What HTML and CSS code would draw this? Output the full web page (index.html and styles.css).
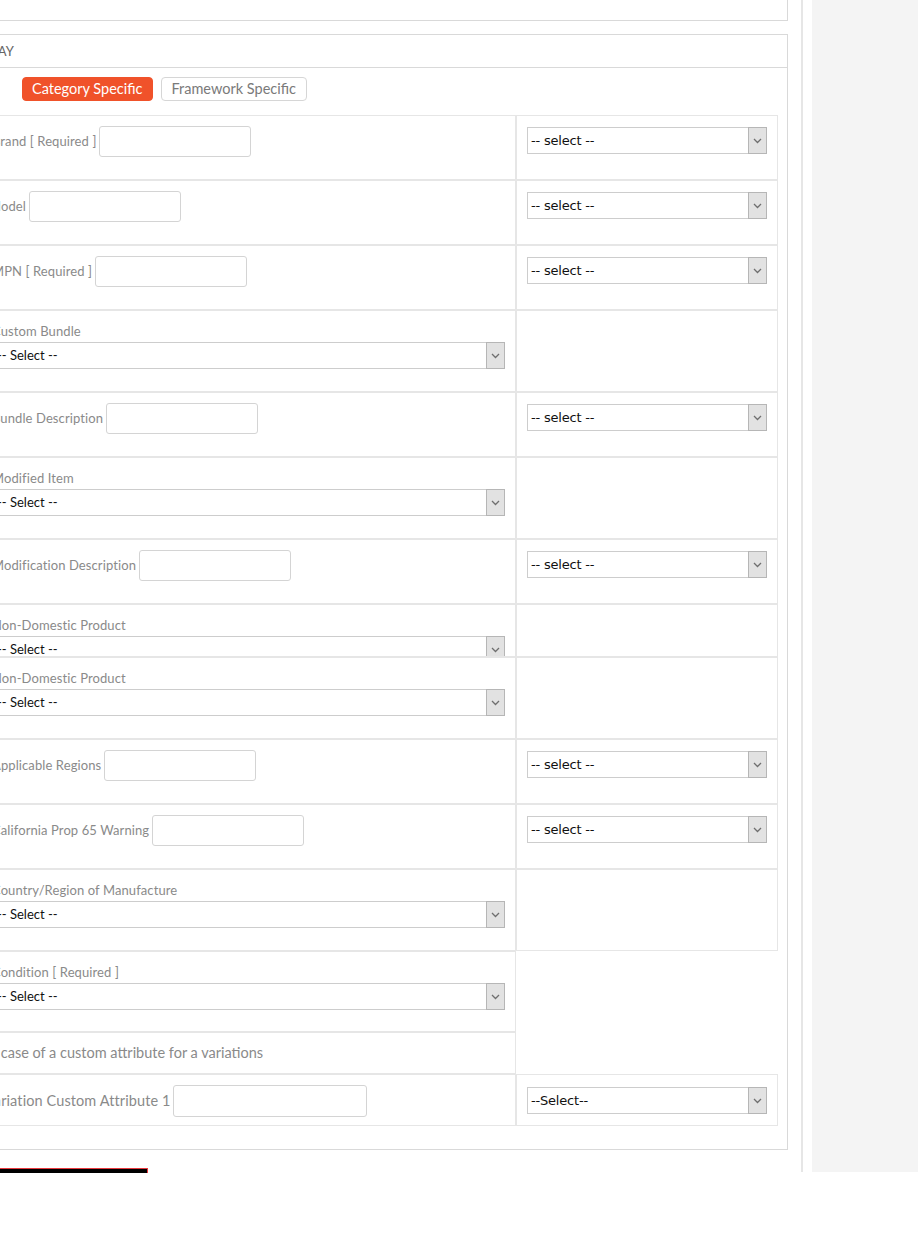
FILE: index.html
```html
<!DOCTYPE html>
<html lang="en">
<head>
    <meta charset="UTF-8">
    <title>Item Specifics</title>
    <link rel="stylesheet" href="styles.css">
</head>
<body>

<div class="page">
    <div class="main">
        <div class="panel panel-top"></div>

        <div class="panel">
            <div class="panel-heading">eBay</div>
            <div class="panel-body">
                <div class="tabs">
                    <span class="tab tab-active">Category Specific</span>
                    <span class="tab">Framework Specific</span>
                </div>

                <div class="attr-table">
                    <!-- inline rows: label + text box, mapping select on the right -->
                    <div class="attr-row">
                        <div class="attr-cell attr-main attr-inline"><label>Brand [ Required ]</label><input type="text" class="attr-input"></div>
                        <div class="attr-cell attr-side">
                            <div class="sel sel-map"><span class="sel-text">-- select --</span><span class="sel-btn"><svg width="9" height="6" viewBox="0 0 9 6"><path d="M1 1l3.5 3.5L8 1" fill="none" stroke="#6f6f6f" stroke-width="1.3"/></svg></span></div>
                        </div>
                    </div>
                    <div class="attr-row">
                        <div class="attr-cell attr-main attr-inline"><label class="lbl-short">Model</label><input type="text" class="attr-input"></div>
                        <div class="attr-cell attr-side">
                            <div class="sel sel-map"><span class="sel-text">-- select --</span><span class="sel-btn"><svg width="9" height="6" viewBox="0 0 9 6"><path d="M1 1l3.5 3.5L8 1" fill="none" stroke="#6f6f6f" stroke-width="1.3"/></svg></span></div>
                        </div>
                    </div>
                    <div class="attr-row">
                        <div class="attr-cell attr-main attr-inline"><label>MPN [ Required ]</label><input type="text" class="attr-input"></div>
                        <div class="attr-cell attr-side">
                            <div class="sel sel-map"><span class="sel-text">-- select --</span><span class="sel-btn"><svg width="9" height="6" viewBox="0 0 9 6"><path d="M1 1l3.5 3.5L8 1" fill="none" stroke="#6f6f6f" stroke-width="1.3"/></svg></span></div>
                        </div>
                    </div>

                    <!-- stacked rows: label above a full width select -->
                    <div class="attr-row">
                        <div class="attr-cell attr-main attr-stack">
                            <label>Custom Bundle</label>
                            <div class="sel sel-value"><span class="sel-text">-- Select --</span><span class="sel-btn"><svg width="9" height="6" viewBox="0 0 9 6"><path d="M1 1l3.5 3.5L8 1" fill="none" stroke="#6f6f6f" stroke-width="1.3"/></svg></span></div>
                        </div>
                        <div class="attr-cell attr-side"></div>
                    </div>
                    <div class="attr-row">
                        <div class="attr-cell attr-main attr-inline"><label>Bundle Description</label><input type="text" class="attr-input"></div>
                        <div class="attr-cell attr-side">
                            <div class="sel sel-map"><span class="sel-text">-- select --</span><span class="sel-btn"><svg width="9" height="6" viewBox="0 0 9 6"><path d="M1 1l3.5 3.5L8 1" fill="none" stroke="#6f6f6f" stroke-width="1.3"/></svg></span></div>
                        </div>
                    </div>
                    <div class="attr-row">
                        <div class="attr-cell attr-main attr-stack">
                            <label>Modified Item</label>
                            <div class="sel sel-value"><span class="sel-text">-- Select --</span><span class="sel-btn"><svg width="9" height="6" viewBox="0 0 9 6"><path d="M1 1l3.5 3.5L8 1" fill="none" stroke="#6f6f6f" stroke-width="1.3"/></svg></span></div>
                        </div>
                        <div class="attr-cell attr-side"></div>
                    </div>
                    <div class="attr-row">
                        <div class="attr-cell attr-main attr-inline"><label>Modification Description</label><input type="text" class="attr-input"></div>
                        <div class="attr-cell attr-side">
                            <div class="sel sel-map"><span class="sel-text">-- select --</span><span class="sel-btn"><svg width="9" height="6" viewBox="0 0 9 6"><path d="M1 1l3.5 3.5L8 1" fill="none" stroke="#6f6f6f" stroke-width="1.3"/></svg></span></div>
                        </div>
                    </div>
                    <div class="attr-row attr-row-cut">
                        <div class="attr-cell attr-main attr-stack">
                            <label>Non-Domestic Product</label>
                            <div class="sel sel-value"><span class="sel-text">-- Select --</span><span class="sel-btn"><svg width="9" height="6" viewBox="0 0 9 6"><path d="M1 1l3.5 3.5L8 1" fill="none" stroke="#6f6f6f" stroke-width="1.3"/></svg></span></div>
                        </div>
                        <div class="attr-cell attr-side"></div>
                    </div>
                    <div class="attr-row">
                        <div class="attr-cell attr-main attr-stack">
                            <label>Non-Domestic Product</label>
                            <div class="sel sel-value"><span class="sel-text">-- Select --</span><span class="sel-btn"><svg width="9" height="6" viewBox="0 0 9 6"><path d="M1 1l3.5 3.5L8 1" fill="none" stroke="#6f6f6f" stroke-width="1.3"/></svg></span></div>
                        </div>
                        <div class="attr-cell attr-side"></div>
                    </div>
                    <div class="attr-row">
                        <div class="attr-cell attr-main attr-inline"><label>Applicable Regions</label><input type="text" class="attr-input"></div>
                        <div class="attr-cell attr-side">
                            <div class="sel sel-map"><span class="sel-text">-- select --</span><span class="sel-btn"><svg width="9" height="6" viewBox="0 0 9 6"><path d="M1 1l3.5 3.5L8 1" fill="none" stroke="#6f6f6f" stroke-width="1.3"/></svg></span></div>
                        </div>
                    </div>
                    <div class="attr-row">
                        <div class="attr-cell attr-main attr-inline"><label>California Prop 65 Warning</label><input type="text" class="attr-input"></div>
                        <div class="attr-cell attr-side">
                            <div class="sel sel-map"><span class="sel-text">-- select --</span><span class="sel-btn"><svg width="9" height="6" viewBox="0 0 9 6"><path d="M1 1l3.5 3.5L8 1" fill="none" stroke="#6f6f6f" stroke-width="1.3"/></svg></span></div>
                        </div>
                    </div>
                    <div class="attr-row">
                        <div class="attr-cell attr-main attr-stack">
                            <label>Country/Region of Manufacture</label>
                            <div class="sel sel-value"><span class="sel-text">-- Select --</span><span class="sel-btn"><svg width="9" height="6" viewBox="0 0 9 6"><path d="M1 1l3.5 3.5L8 1" fill="none" stroke="#6f6f6f" stroke-width="1.3"/></svg></span></div>
                        </div>
                        <div class="attr-cell attr-side"></div>
                    </div>
                    <div class="attr-row">
                        <div class="attr-cell attr-main attr-stack attr-last">
                            <label>Condition [ Required ]</label>
                            <div class="sel sel-value"><span class="sel-text">-- Select --</span><span class="sel-btn"><svg width="9" height="6" viewBox="0 0 9 6"><path d="M1 1l3.5 3.5L8 1" fill="none" stroke="#6f6f6f" stroke-width="1.3"/></svg></span></div>
                        </div>
                    </div>

                    <!-- variation attributes -->
                    <div class="attr-row">
                        <div class="attr-cell attr-main attr-note">In case of a custom attribute for a variations</div>
                    </div>
                    <div class="attr-row">
                        <div class="attr-cell attr-main attr-inline attr-var"><label>Variation Custom Attribute 1</label><input type="text" class="attr-input attr-input-wide"></div>
                        <div class="attr-cell attr-side attr-side-var">
                            <div class="sel sel-map"><span class="sel-text">--Select--</span><span class="sel-btn"><svg width="9" height="6" viewBox="0 0 9 6"><path d="M1 1l3.5 3.5L8 1" fill="none" stroke="#6f6f6f" stroke-width="1.3"/></svg></span></div>
                        </div>
                    </div>
                </div>
            </div>
        </div>

        <div class="save-bar"></div>
    </div>

    <div class="sidebar">
        <div class="sidebar-inner"></div>
    </div>
</div>

</body>
</html>
```

FILE: styles.css
```css
body {
    margin: 0;
    padding: 0;
    font-family: "Lato", "Open Sans", sans-serif;
    font-size: 13px;
    color: #333;
    background: #fff;
}
.page {
    display: flex;
    height: 1173px;
    overflow: hidden;
}
.main {
    flex: 0 0 817px;
    margin-left: -29px;
}
.panel {
    box-sizing: border-box;
    border: 1px solid #d9d9d9;
    background: #fff;
}
.panel-top {
    height: 21px;
    border-top: none;
    margin-bottom: 13px;
}
.panel-heading {
    box-sizing: border-box;
    height: 33px;
    line-height: 32px;
    padding: 0 10px;
    border-bottom: 1px solid #d9d9d9;
    text-transform: uppercase;
    color: #666;
    font-size: 13px;
}
.panel-body {
    padding: 9px 9px 23px;
}
.tabs {
    display: flex;
    gap: 8px;
    padding-left: 41px;
    margin-bottom: 14px;
}
.tab {
    box-sizing: border-box;
    height: 24px;
    line-height: 22px;
    padding: 0 9px;
    border: 1px solid #d6d6d6;
    border-radius: 4px;
    font-size: 14.5px;
    color: #7a7a7a;
    background: #fff;
}
.tab + .tab {
    padding: 0 10px;
}
.tab-active {
    background: #f0522a;
    border-color: #f0522a;
    color: #fff;
}

/* attribute grid */
.attr-row {
    display: flex;
}
.attr-cell {
    box-sizing: border-box;
    border: 1px solid #e6e6e6;
}
.attr-main {
    flex: 0 0 535px;
    padding: 10px 10px 22px;
}
.attr-main label {
    color: #8a8a8a;
    letter-spacing: 0.1px;
}
.attr-inline {
    display: flex;
    align-items: flex-start;
    gap: 3px;
}
.attr-inline label {
    line-height: 31px;
}
.attr-inline .lbl-short {
    margin-left: -3px;
}
.attr-side {
    flex: 0 0 262px;
    padding: 11px 10px;
}
.attr-input {
    box-sizing: border-box;
    flex: none;
    width: 152px;
    height: 31px;
    margin: 0;
    padding: 0;
    border: 1px solid #d4d4d4;
    border-radius: 3px;
}
.attr-input-wide {
    width: 194px;
    height: 32px;
}
.attr-stack {
    line-height: 20px;
}
.attr-stack label {
    display: block;
    margin-bottom: 1px;
}
.attr-last {
    padding-bottom: 21px;
}
.attr-row-cut .attr-cell {
    height: 53px;
    overflow: hidden;
}
.attr-note {
    padding: 10px 10px 10px 3px;
    line-height: 20px;
    font-size: 14.5px;
    color: #8a8a8a;
}
.attr-var {
    padding: 10px 10px 8px 3px;
}
.attr-var label {
    font-size: 14.5px;
    line-height: 32px;
}
.attr-side-var {
    padding: 12px 10px 11px;
}

/* select boxes */
.sel {
    box-sizing: border-box;
    display: flex;
    height: 27px;
    border: 1px solid #cdcdcd;
    background: #fff;
    color: #111;
}
.sel-text {
    flex: 1;
    padding-left: 3px;
    line-height: 25px;
    white-space: nowrap;
}
.sel-map .sel-text {
    font-family: "DejaVu Sans", sans-serif;
    font-size: 13px;
    letter-spacing: -0.2px;
}
.sel-value .sel-text {
    padding-left: 4px;
    font-size: 13px;
}
.sel-btn {
    box-sizing: border-box;
    width: 19px;
    margin: -1px -1px -1px 0;
    border: 1px solid #b6b6b6;
    background: #e2e2e2;
    display: flex;
    align-items: center;
    justify-content: center;
}

.save-bar {
    width: 177px;
    height: 5px;
    margin-top: 18px;
    box-sizing: border-box;
    background: #000;
    border-top: 1px solid #e8383d;
    border-right: 1px solid #e8383d;
}
.sidebar {
    flex: 1;
    margin-left: 13px;
    padding-left: 9px;
    border-left: 2px solid #e6e6e6;
    height: 1172px;
}
.sidebar-inner {
    height: 100%;
    background: #f4f4f4;
}
```
